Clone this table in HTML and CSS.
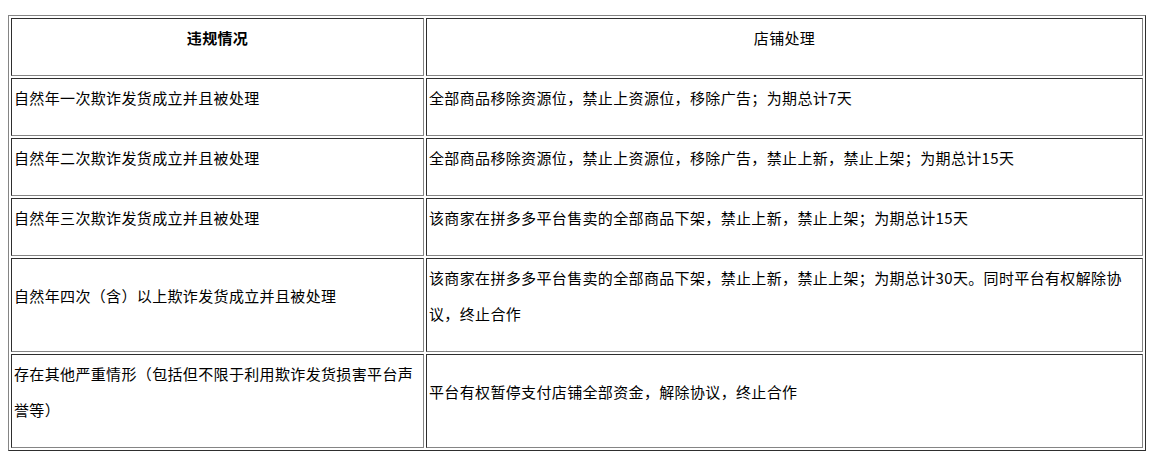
FILE: index.html
```html
<!DOCTYPE html>
<html lang="zh-CN">
<head>
<meta charset="utf-8">
<title>违规处理</title>
<link rel="stylesheet" href="styles.css">
</head>
<body>
<table class="rules">
  <thead>
    <tr>
      <th class="col-case"><p class="cell-text">违规情况</p></th>
      <th class="col-action plain"><p class="cell-text">店铺处理</p></th>
    </tr>
  </thead>
  <tbody>
    <tr>
      <td><p class="cell-text">自然年一次欺诈发货成立并且被处理</p></td>
      <td><p class="cell-text">全部商品移除资源位，禁止上资源位，移除广告；为期总计7天</p></td>
    </tr>
    <tr>
      <td><p class="cell-text">自然年二次欺诈发货成立并且被处理</p></td>
      <td><p class="cell-text">全部商品移除资源位，禁止上资源位，移除广告，禁止上新，禁止上架；为期总计15天</p></td>
    </tr>
    <tr>
      <td><p class="cell-text">自然年三次欺诈发货成立并且被处理</p></td>
      <td><p class="cell-text">该商家在拼多多平台售卖的全部商品下架，禁止上新，禁止上架；为期总计15天</p></td>
    </tr>
    <tr>
      <td><p class="cell-text">自然年四次（含）以上欺诈发货成立并且被处理</p></td>
      <td><p class="cell-text">该商家在拼多多平台售卖的全部商品下架，禁止上新，禁止上架；为期总计30天。同时平台有权解除协议，终止合作</p></td>
    </tr>
    <tr>
      <td><p class="cell-text">存在其他严重情形（包括但不限于利用欺诈发货损害平台声誉等）</p></td>
      <td><p class="cell-text">平台有权暂停支付店铺全部资金，解除协议，终止合作</p></td>
    </tr>
  </tbody>
</table>
</body>
</html>
```

FILE: styles.css
```css
html, body {
  background: #ffffff;
}

body {
  margin: 8px;
  font-family: "Noto Sans CJK SC", "Liberation Sans", sans-serif;
  font-size: 15px;
  color: #000000;
}

.rules {
  width: 1138px;
  margin-top: 7px;
  border-collapse: separate;
  border-spacing: 2px;
  table-layout: fixed;
  border-width: 1px;
  border-style: solid;
  border-color: #858585 #2e2e2e #2e2e2e #858585;
}

.rules th,
.rules td {
  box-sizing: border-box;
  padding: 1px 2px;
  vertical-align: middle;
  border-width: 1px;
  border-style: solid;
  border-color: #2e2e2e #858585 #858585 #2e2e2e;
  letter-spacing: 0.35px;
}

.rules td {
  text-align: left;
}

.rules th {
  text-align: center;
  font-weight: bold;
}

.rules th.plain {
  font-weight: normal;
}

.col-case {
  width: 413px;
}

.cell-text {
  margin: 0 0 18px;
  line-height: 36px;
}
```
